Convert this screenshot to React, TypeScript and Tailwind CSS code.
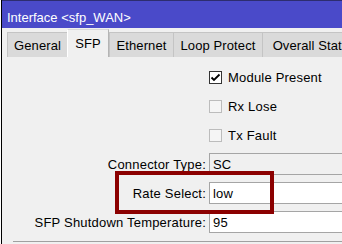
const tabs = [
  { name: "General", w: "w-[60px]" },
  { name: "SFP", w: "w-[42px]", active: true },
  { name: "Ethernet", w: "w-[64px]" },
  { name: "Loop Protect", w: "w-[89px]" },
  { name: "Overall Stats", w: "w-[96px]" },
];

const Checkbox = ({ checked, label }: { checked?: boolean; label: string }) => (
  <div className="flex h-[22px] items-center">
    <div className="w-[207px] shrink-0" />
    <div
      className={
        checked
          ? "flex h-[13px] w-[13px] shrink-0 items-center justify-center border border-[#333333] bg-white"
          : "h-[13px] w-[13px] shrink-0 border border-[#bcbcbc] bg-[#f5f5f5]"
      }
    >
      {checked && (
        <svg width="11" height="11" viewBox="0 0 11 11">
          <path d="M1.5 5.5 L4 8 L9.5 2.5" fill="none" stroke="#000" strokeWidth="1.8" />
        </svg>
      )}
    </div>
    <span className="ml-[6px] whitespace-nowrap tracking-[0.2px]">{label}</span>
  </div>
);

const Field = ({ label, value, readOnly }: { label: string; value: string; readOnly?: boolean }) => (
  <div className="flex h-[22px] items-center">
    <span className="w-[204px] shrink-0 whitespace-nowrap text-right tracking-[0.2px]">{label}</span>
    <div
      className={
        "ml-[3px] flex h-[22px] w-[150px] shrink-0 items-center border border-[#a5a5a5] pl-[3px] tracking-[0.2px] " +
        (readOnly ? "bg-[#f0f0f0]" : "bg-white")
      }
    >
      {value}
    </div>
  </div>
);

export default function App() {
  return (
    <div className="relative h-[244px] w-[342px] overflow-hidden bg-white font-['Liberation_Sans',Arial,sans-serif] text-[13px] leading-[15px] text-black">
      <div className="flex h-full pl-px">
        <div className="flex min-w-0 flex-1 flex-col border-l border-black bg-[#f0f0f0]">
          {/* Title bar */}
          <div className="h-[28px] shrink-0 whitespace-nowrap border-t border-[#2d2d70] bg-[#4a4ac9] pl-[5px] pt-[9px] text-white">
            Interface &lt;sfp_WAN&gt;
          </div>

          {/* Tabs */}
          <div className="flex h-[29px] shrink-0 items-end pl-[5px]">
            {tabs.map((t) =>
              t.active ? (
                <div
                  key={t.name}
                  className={`${t.w} h-[28px] shrink-0 whitespace-nowrap border-l border-r border-t border-l-white border-r-[#b4b4b4] border-t-[#d8d8d8] bg-[#f0f0f0] pt-[6px] text-center`}
                >
                  {t.name}
                </div>
              ) : (
                <div
                  key={t.name}
                  className={`${t.w} h-[25px] shrink-0 whitespace-nowrap border-l border-t border-[#c4c4c4] bg-[#dadada] pt-[5px] text-center tracking-[0.1px]`}
                >
                  {t.name}
                </div>
              )
            )}
          </div>

          {/* Content */}
          <div className="flex flex-col gap-[7px] pt-[9px]">
            <Checkbox checked label="Module Present" />
            <Checkbox label="Rx Lose" />
            <Checkbox label="Tx Fault" />
            <Field label="Connector Type:" value="SC" readOnly />
            <Field label="Rate Select:" value="low" />
            <Field label="SFP Shutdown Temperature:" value="95" />
          </div>
          <div className="ml-[11px] mt-[8px] border-t border-[#a0a0a0]" />
        </div>
      </div>

      {/* Highlight box */}
      <div className="absolute left-[115px] top-[171px] h-[43px] w-[159px] border-[4px] border-[#8b0000]" />
    </div>
  );
}
